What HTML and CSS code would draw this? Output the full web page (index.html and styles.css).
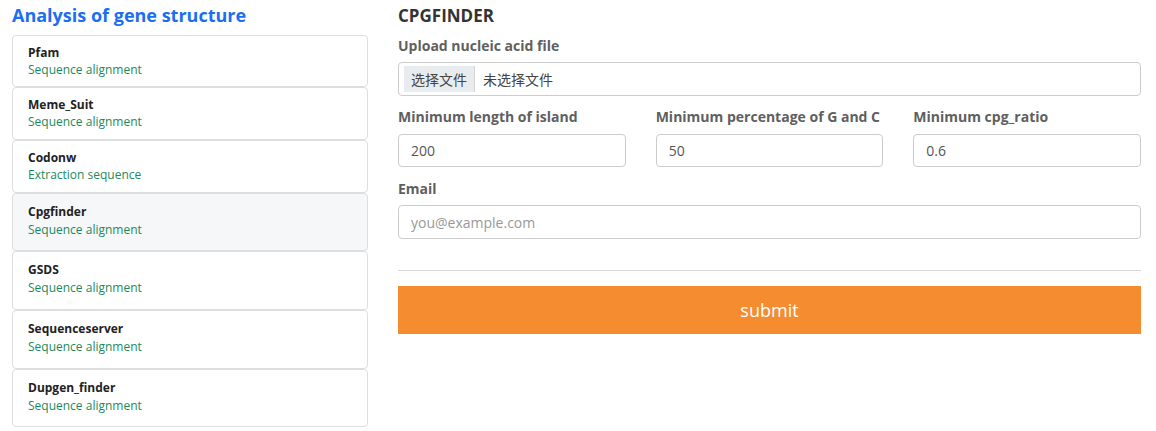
FILE: index.html
```html
<!DOCTYPE html>
<html lang="en">
<head>
<meta charset="utf-8">
<title>Analysis of gene structure</title>
<link rel="stylesheet" href="styles.css">
</head>
<body>
<div class="page">
  <aside class="sidebar">
    <h1 class="side-title">Analysis of gene structure</h1>
    <ul class="tools">
      <li class="tool short"><div class="tool-name">Pfam</div><div class="tool-desc">Sequence alignment</div></li>
      <li class="tool"><div class="tool-name">Meme_Suit</div><div class="tool-desc">Sequence alignment</div></li>
      <li class="tool"><div class="tool-name">Codonw</div><div class="tool-desc">Extraction sequence</div></li>
      <li class="tool tall active"><div class="tool-name">Cpgfinder</div><div class="tool-desc">Sequence alignment</div></li>
      <li class="tool tall"><div class="tool-name">GSDS</div><div class="tool-desc">Sequence alignment</div></li>
      <li class="tool tall"><div class="tool-name">Sequenceserver</div><div class="tool-desc">Sequence alignment</div></li>
      <li class="tool tall"><div class="tool-name">Dupgen_finder</div><div class="tool-desc">Sequence alignment</div></li>
    </ul>
  </aside>
  <main class="content">
    <h2 class="form-title">CPGFINDER</h2>
    <div class="group">
      <label class="label">Upload nucleic acid file</label>
      <div class="file-box">
        <span class="file-btn">选择文件</span>
        <span class="file-name">未选择文件</span>
      </div>
    </div>
    <div class="row">
      <div class="group">
        <label class="label">Minimum length of island</label>
        <input class="input" type="text" value="200">
      </div>
      <div class="group">
        <label class="label">Minimum percentage of G and C</label>
        <input class="input" type="text" value="50">
      </div>
      <div class="group">
        <label class="label">Minimum cpg_ratio</label>
        <input class="input" type="text" value="0.6">
      </div>
    </div>
    <div class="group email">
      <label class="label">Email</label>
      <input class="input" type="text" placeholder="you@example.com">
    </div>
    <hr class="divider">
    <button class="submit" type="button">submit</button>
  </main>
</div>
</body>
</html>
```
FILE: styles.css
```css
* { box-sizing: border-box; }
html, body { margin: 0; padding: 0; background: #fff; }
body { font-family: "Open Sans", "Noto Sans", "Noto Sans CJK SC", sans-serif; color: #333; }

.page {
  display: flex;
  gap: 30px;
  padding: 2px 15px 0 12px;
}

.sidebar { width: 356px; flex: none; }
.side-title {
  margin: 0 0 7px;
  font-size: 18px;
  line-height: 26px;
  font-weight: 700;
  color: #1a6ff0;
}
.tools { list-style: none; margin: 0; padding: 0; display: flex; flex-direction: column; }
.tool {
  border: 1px solid #dedede;
  border-radius: 4px;
  padding: 8px 15px 8px;
  background: #fff;
  height: 53px;
}
.tool.short { height: 52px; }
.tool.tall { height: 59px; padding-top: 9px; }
.tool.active, .tool.tall:last-child { height: 58px; }
.tool.active { background: #f6f7f9; }
.tool-name { font-size: 12px; line-height: 18px; font-weight: 700; color: #222; }
.tool-desc { font-size: 12px; line-height: 17px; color: #1d8a5a; margin-top: -1px; }
.tool.tall .tool-desc { margin-top: 0; }

.content { width: 743px; flex: none; }
.form-title {
  margin: 2px 0 0;
  font-size: 17px;
  line-height: 24px;
  font-weight: 700;
  color: #333;
}
.group { margin-top: 8px; }
.label {
  display: block;
  font-size: 14px;
  line-height: 20px;
  font-weight: 700;
  color: #5f5f5f;
  margin-bottom: 6px;
}
.row { display: flex; gap: 30px; }
.row .group { flex: 1; margin-top: 11px; }
.row .label { margin-bottom: 7px; }
.group.email { margin-top: 12px; }

.file-box {
  display: flex;
  align-items: center;
  height: 34px;
  border: 1px solid #ccc;
  border-radius: 4px;
  padding: 3px 5px;
  font-family: "Noto Sans CJK SC", sans-serif;
  font-size: 14px;
  color: #444;
}
.file-btn {
  display: flex;
  align-items: center;
  height: 26px;
  padding: 0 7px;
  background: #e9ecef;
  border-right: 1px solid #d5d5d5;
}
.file-name { margin-left: 8px; }

.input {
  display: block;
  width: 100%;
  height: 34px;
  border: 1px solid #ccc;
  border-radius: 4px;
  padding: 0 12px;
  font-family: "Open Sans", sans-serif;
  font-size: 14px;
  color: #555;
  background: #fff;
  outline: none;
}
.row .input { height: 33px; }
.input::placeholder { color: #999; }

.divider {
  margin: 31px 0 15px;
  border: 0;
  border-top: 1px solid #d9d9d9;
}
.submit {
  display: block;
  width: 100%;
  height: 48px;
  border: 0;
  background: #f58c30;
  color: #fff;
  font-family: "Open Sans", sans-serif;
  font-size: 18px;
  font-weight: 400;
  cursor: pointer;
}
```
